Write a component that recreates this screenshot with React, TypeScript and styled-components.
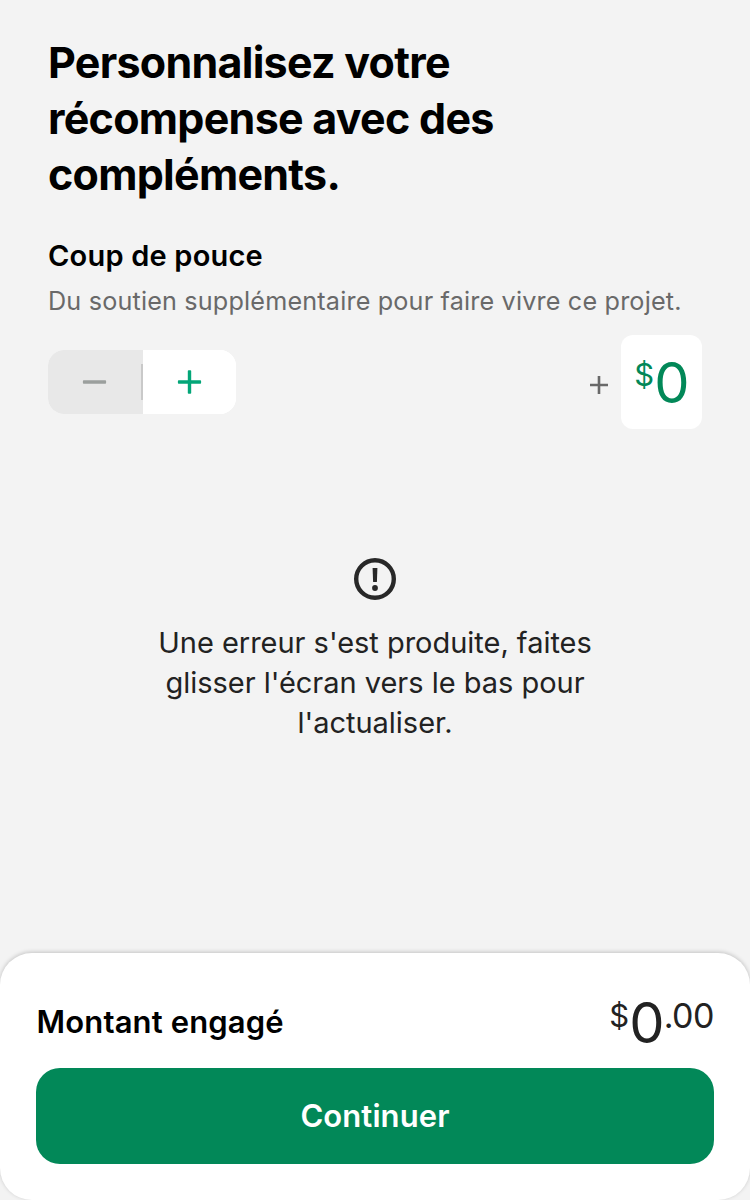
import React from 'react';
import styled, { createGlobalStyle } from 'styled-components';

const GlobalStyle = createGlobalStyle`
  * { box-sizing: border-box; }
  body { margin: 0; background: #f3f3f3; font-family: Inter, sans-serif; }
  h1, h2, p { margin: 0; }
  button { font: inherit; border: 0; padding: 0; }
`;

const Screen = styled.div`
  height: 1200px;
  display: flex;
  flex-direction: column;
  justify-content: space-between;
  overflow: hidden;
`;

const Content = styled.main`
  padding: 34px 48px 0;
`;

const Title = styled.h1`
  font-size: 43px;
  font-weight: 700;
  line-height: 56px;
  letter-spacing: -0.73px;
  color: #000;
`;

const Subtitle = styled.h2`
  margin-top: 35px;
  font-size: 29px;
  font-weight: 600;
  line-height: 38px;
  letter-spacing: 0.2px;
  color: #000;
`;

const Description = styled.p`
  margin-top: 10px;
  font-size: 25.2px;
  line-height: 32px;
  letter-spacing: 0.17px;
  color: #696969;
  white-space: nowrap;
`;

const BonusRow = styled.div`
  margin-top: 18px;
  height: 94px;
  display: flex;
  align-items: center;
  justify-content: space-between;
`;

const Stepper = styled.div`
  width: 188px;
  height: 64px;
  display: flex;
  align-items: center;
  border-radius: 16px;
  overflow: hidden;
  background: #fff;
`;

const StepButton = styled.button<{ $disabled?: boolean }>`
  width: 93px;
  height: 64px;
  display: flex;
  align-items: center;
  justify-content: center;
  background: ${(p) => (p.$disabled ? '#e8e8e8' : '#fff')};
  color: ${(p) => (p.$disabled ? '#9b9f9d' : '#03a678')};
`;

const Divider = styled.div`
  width: 2px;
  height: 64px;
  background: linear-gradient(#e8e8e8 14px, #c9c9c9 14px, #c9c9c9 50px, #e8e8e8 50px);
`;

const AmountGroup = styled.div`
  display: flex;
  align-items: center;
  gap: 13px;
  color: #696969;
`;

const PlusSign = styled.svg`
  margin-top: 5px;
`;

const AmountBox = styled.div`
  width: 81px;
  height: 94px;
  border-radius: 12px;
  background: #fff;
  color: #028858;
  display: flex;
  justify-content: center;
`;

const Price = styled.div`
  display: flex;
  align-items: flex-start;
`;

const Small = styled.span<{ $top: number; $size: number; $spacing?: number }>`
  font-size: ${(p) => p.$size}px;
  line-height: 40px;
  letter-spacing: ${(p) => p.$spacing ?? 0}px;
  margin-top: ${(p) => p.$top}px;
`;

const Big = styled.span<{ $top: number }>`
  font-size: 56px;
  line-height: 60px;
  letter-spacing: -0.8px;
  margin-top: ${(p) => p.$top}px;
`;

const ErrorBlock = styled.section`
  margin-top: 128px;
  display: flex;
  flex-direction: column;
  align-items: center;
`;

const ErrorText = styled.p`
  margin-top: 22px;
  font-size: 29px;
  line-height: 40px;
  letter-spacing: -0.02px;
  color: #222;
  text-align: center;
  white-space: nowrap;
`;

const Footer = styled.footer`
  height: 247px;
  padding: 36px;
  border-radius: 32px;
  background: #fff;
  box-shadow: 0 -1px 4px rgba(0, 0, 0, 0.2);
`;

const PledgeRow = styled.div`
  height: 79px;
  display: flex;
  justify-content: space-between;
  color: #222;
`;

const PledgeLabel = styled.span`
  margin: 13px 0 0 0.6px;
  font-size: 31px;
  font-weight: 600;
  line-height: 40px;
  letter-spacing: 0.13px;
  color: #000;
`;

const ContinueButton = styled.button`
  width: 100%;
  height: 96px;
  padding-bottom: 2px;
  border-radius: 24px;
  background: #028858;
  color: #fff;
  font-size: 31px;
  font-weight: 600;
  letter-spacing: 0.1px;
`;

export default function App() {
  return (
    <Screen>
      <GlobalStyle />
      <Content>
        <Title>Personnalisez votre<br />récompense avec des<br />compléments.</Title>
        <Subtitle>Coup de pouce</Subtitle>
        <Description>Du soutien supplémentaire pour faire vivre ce projet.</Description>
        <BonusRow>
          <Stepper>
            <StepButton $disabled aria-label="Diminuer">
              <svg width="25" height="24" viewBox="0 0 25 24" fill="currentColor">
                <rect x="0.9" y="10.2" width="23.2" height="3.6" rx="0.8" />
              </svg>
            </StepButton>
            <Divider />
            <StepButton aria-label="Augmenter">
              <svg width="25" height="24" viewBox="0 0 25 24" fill="currentColor">
                <rect x="0.9" y="10.3" width="23.2" height="3.4" rx="0.8" />
                <rect x="10.8" y="0.2" width="3.4" height="23.6" rx="0.8" />
              </svg>
            </StepButton>
          </Stepper>
          <AmountGroup>
            <PlusSign width="18" height="18" viewBox="0 0 18 18" stroke="currentColor" strokeWidth="2.6"><path d="M0 9h18M9 0v18" /></PlusSign>
            <AmountBox>
              <Price><Small $top={20} $size={31}>$</Small><Big $top={18}>0</Big></Price>
            </AmountBox>
          </AmountGroup>
        </BonusRow>
        <ErrorBlock>
          <svg width="44" height="44" viewBox="0 0 44 44" fill="none" stroke="#282828">
            <circle cx="22" cy="22" r="18.8" strokeWidth="4.4" />
            <path d="M19.6 11h4.8l-.5 14h-3.8z" fill="#282828" stroke="none" />
            <circle cx="22" cy="31" r="2.9" fill="#282828" stroke="none" />
          </svg>
          <ErrorText>Une erreur s'est produite, faites<br />glisser l'écran vers le bas pour<br />l'actualiser.</ErrorText>
        </ErrorBlock>
      </Content>
      <Footer>
        <PledgeRow>
          <PledgeLabel>Montant engagé</PledgeLabel>
          <Price><Small $top={7} $size={31}>$</Small><Big $top={4}>0</Big><Small $top={7} $size={34} $spacing={-0.5}>.00</Small></Price>
        </PledgeRow>
        <ContinueButton>Continuer</ContinueButton>
      </Footer>
    </Screen>
  );
}
